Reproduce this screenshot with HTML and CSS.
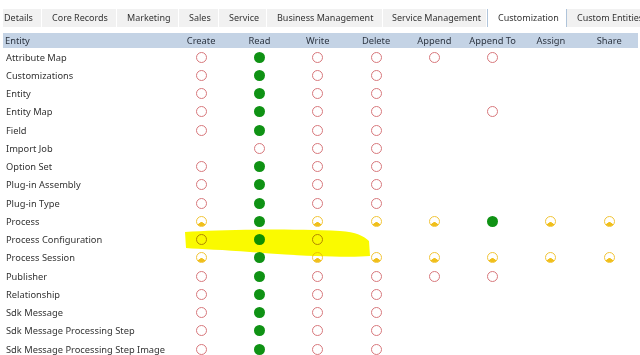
FILE: index.html
```html
<!DOCTYPE html>
<html lang="en">

<head>
    <meta charset="UTF-8">
    <title>Security Role - Customization</title>
    <link rel="stylesheet" href="styles.css">
</head>

<body>
    <div class="tabs">
        <div class="tab tab-details">Details</div>
        <div class="tab tab-core">Core Records</div>
        <div class="tab tab-marketing">Marketing</div>
        <div class="tab tab-sales">Sales</div>
        <div class="tab tab-service">Service</div>
        <div class="tab tab-business">Business Management</div>
        <div class="tab tab-servicemgmt">Service Management</div>
        <div class="tab tab-custom active">Customization</div>
        <div class="tab tab-entities">Custom Entities</div>
    </div>

    <div class="grid">
        <div class="row head">
            <div class="name">Entity</div>
            <div>Create</div><div>Read</div><div>Write</div><div>Delete</div>
            <div>Append</div><div>Append To</div><div>Assign</div><div>Share</div>
        </div>

        <div class="row"><div class="name">Attribute Map</div>
            <div><i class="ico red"></i></div><div><i class="ico green"></i></div><div><i class="ico red"></i></div><div><i class="ico red"></i></div>
            <div><i class="ico red"></i></div><div><i class="ico red"></i></div><div></div><div></div></div>
        <div class="row"><div class="name">Customizations</div>
            <div><i class="ico red"></i></div><div><i class="ico green"></i></div><div><i class="ico red"></i></div><div><i class="ico red"></i></div>
            <div></div><div></div><div></div><div></div></div>
        <div class="row"><div class="name">Entity</div>
            <div><i class="ico red"></i></div><div><i class="ico green"></i></div><div><i class="ico red"></i></div><div><i class="ico red"></i></div>
            <div></div><div></div><div></div><div></div></div>
        <div class="row"><div class="name">Entity Map</div>
            <div><i class="ico red"></i></div><div><i class="ico green"></i></div><div><i class="ico red"></i></div><div><i class="ico red"></i></div>
            <div></div><div><i class="ico red"></i></div><div></div><div></div></div>
        <div class="row"><div class="name">Field</div>
            <div><i class="ico red"></i></div><div><i class="ico green"></i></div><div><i class="ico red"></i></div><div><i class="ico red"></i></div>
            <div></div><div></div><div></div><div></div></div>
        <div class="row"><div class="name">Import Job</div>
            <div></div><div><i class="ico red"></i></div><div><i class="ico red"></i></div><div><i class="ico red"></i></div>
            <div></div><div></div><div></div><div></div></div>
        <div class="row"><div class="name">Option Set</div>
            <div><i class="ico red"></i></div><div><i class="ico green"></i></div><div><i class="ico red"></i></div><div><i class="ico red"></i></div>
            <div></div><div></div><div></div><div></div></div>
        <div class="row"><div class="name">Plug-in Assembly</div>
            <div><i class="ico red"></i></div><div><i class="ico green"></i></div><div><i class="ico red"></i></div><div><i class="ico red"></i></div>
            <div></div><div></div><div></div><div></div></div>
        <div class="row"><div class="name">Plug-in Type</div>
            <div><i class="ico red"></i></div><div><i class="ico green"></i></div><div><i class="ico red"></i></div><div><i class="ico red"></i></div>
            <div></div><div></div><div></div><div></div></div>
        <div class="row"><div class="name">Process</div>
            <div><i class="ico user"></i></div><div><i class="ico green"></i></div><div><i class="ico user"></i></div><div><i class="ico user"></i></div>
            <div><i class="ico user"></i></div><div><i class="ico green"></i></div><div><i class="ico user"></i></div><div><i class="ico user"></i></div></div>
        <div class="row"><div class="name">Process Configuration</div>
            <div><i class="ico gold"></i></div><div><i class="ico green"></i></div><div><i class="ico gold"></i></div><div></div>
            <div></div><div></div><div></div><div></div></div>
        <div class="row"><div class="name">Process Session</div>
            <div><i class="ico user"></i></div><div><i class="ico green"></i></div><div><i class="ico user"></i></div><div><i class="ico user"></i></div>
            <div><i class="ico user"></i></div><div><i class="ico user"></i></div><div><i class="ico user"></i></div><div><i class="ico user"></i></div></div>
        <div class="row"><div class="name">Publisher</div>
            <div><i class="ico red"></i></div><div><i class="ico green"></i></div><div><i class="ico red"></i></div><div><i class="ico red"></i></div>
            <div><i class="ico red"></i></div><div><i class="ico red"></i></div><div></div><div></div></div>
        <div class="row"><div class="name">Relationship</div>
            <div><i class="ico red"></i></div><div><i class="ico green"></i></div><div><i class="ico red"></i></div><div><i class="ico red"></i></div>
            <div></div><div></div><div></div><div></div></div>
        <div class="row"><div class="name">Sdk Message</div>
            <div><i class="ico red"></i></div><div><i class="ico green"></i></div><div><i class="ico red"></i></div><div><i class="ico red"></i></div>
            <div></div><div></div><div></div><div></div></div>
        <div class="row"><div class="name">Sdk Message Processing Step</div>
            <div><i class="ico red"></i></div><div><i class="ico green"></i></div><div><i class="ico red"></i></div><div><i class="ico red"></i></div>
            <div></div><div></div><div></div><div></div></div>
        <div class="row"><div class="name">Sdk Message Processing Step Image</div>
            <div><i class="ico red"></i></div><div><i class="ico green"></i></div><div><i class="ico red"></i></div><div><i class="ico red"></i></div>
            <div></div><div></div><div></div><div></div></div>
    </div>

    <!-- highlighter stroke drawn over the Process Configuration row -->
    <svg class="marker" width="640" height="355" viewBox="0 0 640 355">
        <path d="M185 232 C220 229 290 229 340 231 C356 232 364 236 369 241 L370 256 C350 258 300 256 250 252 C225 250 200 249 186 248 Z" fill="#fafa00" />
    </svg>
</body>

</html>
```

FILE: styles.css
```css
body {
    margin: 0;
    background-color: #fff;
    font-family: 'Noto Sans', sans-serif;
    font-size: 9.3px;
    color: #333;
    width: 640px;
    height: 355px;
    overflow: hidden;
    position: relative;
}

.tabs {
    display: flex;
    margin: 9px 0 0 3px;
    height: 18px;
    background-color: #f1f1f1;
    align-items: stretch;
    white-space: nowrap;
    overflow: hidden;
    font-size: 9px;
}

.tab {
    flex: none;
    box-sizing: border-box;
    padding-left: 10px;
    line-height: 18px;
    border-right: 1px solid #fff;
    color: #333;
    overflow: hidden;
}

.tab-details { width: 39px; padding-left: 1px; }
.tab-core { width: 75px; }
.tab-marketing { width: 62px; }
.tab-sales { width: 40px; }
.tab-service { width: 48px; }
.tab-business { width: 116px; }
.tab-servicemgmt { width: 104px; padding-left: 9px; }
.tab-custom { width: 80px; }
.tab-entities { width: 80px; }

.tab.active {
    background-color: #fff;
    border: 1px solid #afc4da;
    border-bottom: none;
    margin-top: -2px;
    line-height: 20px;
    height: 21px;
}

.grid {
    margin: 6px 2px 0 3px;
}

.row {
    display: grid;
    grid-template-columns: 169px repeat(8, 58.3px);
    height: 18.25px;
    align-items: center;
    justify-items: center;
    white-space: nowrap;
}

.row .name {
    justify-self: start;
    padding-left: 3px;
}

.row.head {
    height: 15px;
    background-color: #c4d3e5;
    color: #2c3440;
}

.row.head .name {
    padding-left: 2px;
}

.ico {
    display: block;
    width: 11px;
    height: 11px;
    box-sizing: border-box;
    border-radius: 50%;
}

.ico.red {
    border: 1.3px solid #d8787c;
}

.ico.green {
    background-color: #0f9214;
}

.ico.gold {
    border: 1.3px solid #b58a10;
}

.ico.user {
    border: 1.2px solid #f2c537;
    background: radial-gradient(circle at 50% 100%, #f0bf1a 0, #f0bf1a 3.5px, transparent 4px);
}

.marker {
    position: absolute;
    left: 0;
    top: 0;
    mix-blend-mode: multiply;
    pointer-events: none;
}
```
